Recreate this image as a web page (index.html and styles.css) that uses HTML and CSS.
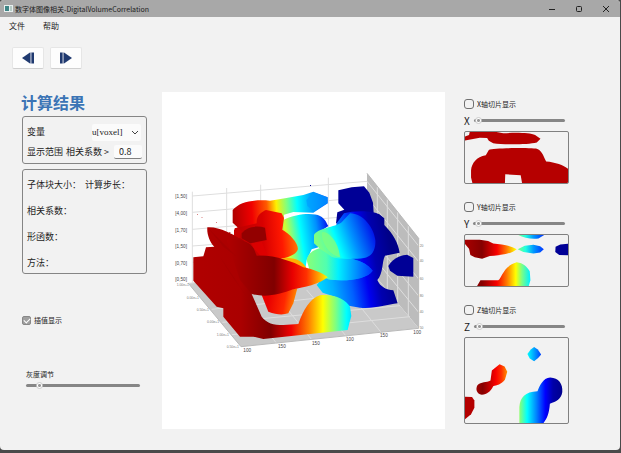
FILE: index.html
```html
<!DOCTYPE html>
<html lang="zh-CN">
<head>
<meta charset="utf-8">
<title>数字体图像相关-DigitalVolumeCorrelation</title>
<link rel="stylesheet" href="styles.css">
</head>
<body>
<div class="window">
  <header class="titlebar">
    <svg class="app-icon" viewBox="0 0 9 7"><rect width="9" height="7" fill="#e8efef"/><rect x="1" y="1" width="4" height="5" fill="#3f8586"/><rect x="6" y="1" width="2" height="5" fill="#b6cbc5"/></svg>
    <h1 class="title">数字体图像相关-DigitalVolumeCorrelation</h1>
    <div class="window-buttons">
      <button aria-label="最小化"><svg viewBox="0 0 8 8"><path d="M1 4.5H7"/></svg></button>
      <button aria-label="最大化"><svg viewBox="0 0 8 8"><rect x="1.5" y="1.5" width="5" height="5" rx="1"/></svg></button>
      <button aria-label="关闭"><svg viewBox="0 0 8 8"><path d="M1 1L7 7M7 1L1 7"/></svg></button>
    </div>
  </header>
  <nav class="menu"><button>文件</button><button>帮助</button></nav>
  <div class="toolbar">
    <button aria-label="上一步"><svg viewBox="0 0 12 12"><path d="M0 6L8 0.5V11.5Z" fill="#203a70"/><path d="M8 0.5H9.5V11.5H8Z" fill="#8996b3"/><path d="M9.5 0.5H12V11.5H9.5Z" fill="#203a70"/></svg></button>
    <button aria-label="下一步"><svg viewBox="0 0 12 12"><path d="M12 6L4 0.5V11.5Z" fill="#203a70"/><path d="M2.5 0.5H4V11.5H2.5Z" fill="#8996b3"/><path d="M0 0.5H2.5V11.5H0Z" fill="#203a70"/></svg></button>
  </div>
  <main class="workspace">
    <section class="results">
      <h2>计算结果</h2>
      <div class="panel options">
        <div class="row">
          <label for="variable">变量</label>
          <span class="combo">
            <select id="variable"><option>u[voxel]</option></select>
            <svg viewBox="0 0 8 5"><path d="M1 1L4 4L7 1"/></svg>
          </span>
        </div>
        <div class="row">
          <label for="threshold" class="range-label"><span>显示范围</span><span>相关系数 &gt;</span></label>
          <input id="threshold" class="number" type="text" value="0.8">
        </div>
      </div>
      <div class="panel summary">
        <p><span>子体块大小：</span><span>计算步长：</span></p>
        <p>相关系数：</p>
        <p>形函数：</p>
        <p>方法：</p>
      </div>
      <label class="check interpolate"><input type="checkbox" checked>插值显示</label>
      <div class="gray">
        <label for="gray">灰度调节</label>
        <input id="gray" type="range" min="0" max="100" value="9">
      </div>
    </section>

    <section class="view">
      <svg viewBox="6 -204 849 1011" role="img" aria-label="位移场三维视图">
        <defs>
          <linearGradient id="band" gradientUnits="userSpaceOnUse" x1="218" y1="150" x2="503" y2="130">
            <stop offset="0" stop-color="#b00000"/><stop offset=".2" stop-color="#f00000"/><stop offset=".36" stop-color="#ff5a00"/><stop offset=".46" stop-color="#fff000"/><stop offset=".57" stop-color="#80ff80"/><stop offset=".68" stop-color="#00ffff"/><stop offset=".82" stop-color="#00a8ff"/><stop offset="1" stop-color="#0048ff"/>
          </linearGradient>
          <linearGradient id="middle" gradientUnits="userSpaceOnUse" x1="350" y1="250" x2="515" y2="225">
            <stop offset="0" stop-color="#ffa000"/><stop offset=".18" stop-color="#d8ff28"/><stop offset=".32" stop-color="#70ff90"/><stop offset=".46" stop-color="#00ffff"/><stop offset=".75" stop-color="#0090ff"/><stop offset="1" stop-color="#0000f0"/>
          </linearGradient>
          <linearGradient id="lobe" gradientUnits="userSpaceOnUse" x1="220" y1="230" x2="420" y2="215">
            <stop offset="0" stop-color="#b80000"/><stop offset=".45" stop-color="#d80000"/><stop offset=".72" stop-color="#ff1800"/><stop offset="1" stop-color="#ff8800"/>
          </linearGradient>
          <linearGradient id="blue" gradientUnits="userSpaceOnUse" x1="470" y1="350" x2="700" y2="310">
            <stop offset="0" stop-color="#00d8ff"/><stop offset=".18" stop-color="#00b0ff"/><stop offset=".42" stop-color="#0060ff"/><stop offset=".63" stop-color="#0000f0"/><stop offset=".78" stop-color="#0000b0"/><stop offset="1" stop-color="#000088"/>
          </linearGradient>
          <linearGradient id="upper" gradientUnits="userSpaceOnUse" x1="480" y1="270" x2="645" y2="210">
            <stop offset="0" stop-color="#80ff80"/><stop offset=".2" stop-color="#50ffb0"/><stop offset=".32" stop-color="#00ffff"/><stop offset=".6" stop-color="#0090ff"/><stop offset="1" stop-color="#0008e8"/>
          </linearGradient>
          <linearGradient id="lower" gradientUnits="userSpaceOnUse" x1="440" y1="0" x2="638" y2="0">
            <stop offset="0" stop-color="#88ff78"/><stop offset=".3" stop-color="#50ffb0"/><stop offset=".48" stop-color="#00f0ff"/><stop offset=".75" stop-color="#0090ff"/><stop offset="1" stop-color="#0030ff"/>
          </linearGradient>
          <linearGradient id="cone" gradientUnits="userSpaceOnUse" x1="200" y1="0" x2="503" y2="0">
            <stop offset="0" stop-color="#b00000"/><stop offset=".47" stop-color="#800000"/><stop offset=".65" stop-color="#e80000"/><stop offset=".79" stop-color="#ff3000"/><stop offset=".9" stop-color="#ff9800"/><stop offset="1" stop-color="#f8ff00"/>
          </linearGradient>
          <linearGradient id="base" gradientUnits="userSpaceOnUse" x1="100" y1="0" x2="574" y2="0">
            <stop offset="0" stop-color="#b00000"/><stop offset=".3" stop-color="#aa0000"/><stop offset=".49" stop-color="#800000"/><stop offset=".62" stop-color="#f00000"/><stop offset=".73" stop-color="#ff8000"/><stop offset=".82" stop-color="#ffff00"/><stop offset=".9" stop-color="#80ff80"/><stop offset=".97" stop-color="#00ffff"/><stop offset="1" stop-color="#00e0ff"/>
          </linearGradient>
          <linearGradient id="tail" gradientUnits="userSpaceOnUse" x1="325" y1="420" x2="412" y2="435">
            <stop offset="0" stop-color="#e80000"/><stop offset=".55" stop-color="#ff2800"/><stop offset="1" stop-color="#ffa000"/>
          </linearGradient>
        </defs>
        <path d="M621 40L776 235V505L621 318Z" fill="#bcbcbc"/>
        <path d="M85 370L621 318L776 505L243 560Z" fill="#c9c9c9"/>
        <g fill="none" stroke="#dedede" stroke-width="3">
          <path d="M97 95V370M200 84V370M302 74V340M505 53V330M97 108L621 64M97 157L621 112M97 208L621 165M97 258L621 218M97 307L621 268M85 370L621 318"/>
          <path d="M621 64L776 258M621 112L776 305M621 165L776 357M621 218L776 408M621 268L776 457M652 80V355M682 118V390M713 155V430M745 195V468M155 448L680 392M187 487L720 437M215 524L750 470M350 550L290 475M456 540L360 420M560 530L440 390M664 518L560 390"/>
        </g>
        <path d="M621 40L776 235V505L243 560L85 370" fill="none" stroke="#b9b9b9" stroke-width="3"/>
        <path d="M450 75h3v3h-3Z" fill="#000090"/><path d="M112 162h2v2h-2ZM169 186h2v2h-2ZM125 172h2v2h-2ZM208 216h3v3h-3Z" fill="#b00000"/>
        <path d="M535 91L575 82L612 79L628 98L639 128L641 158L570 195L528 190L532 157L553 149L535 130Z" fill="#000096"/>
        <path d="M530 190L552 160C580 151 640 151 658 163L673 175V195C700 222 715 250 719 278L675 287C665 305 671 338 652 360C660 380 680 390 700 391L713 430C680 435 640 447 600 443L566 437L525 410L488 398L470 375L500 340Z" fill="url(#blue)"/>
        <path d="M685 318C700 290 730 285 741 284L760 294V350L712 347L690 332Z" fill="#000096"/>
        <path d="M370 180C410 160 460 158 480 168C495 175 500 190 505 198L465 225L475 262L455 268L440 300L437 320L365 295Z" fill="url(#middle)"/>
        <path d="M218 150C240 125 280 118 330 122L375 115L430 105L460 95L503 112V130L460 158L400 156L372 164V215L250 260L236 205L218 188Z" fill="url(#band)"/>
        <path d="M439 120L460 97L503 112V130L461 154L442 138Z" fill="#009eff" opacity=".7"/>
        <path d="M224 205L290 190C288 165 308 154 318 150L365 160L372 174L367 209C390 222 418 252 413 270C407 284 385 292 362 297L310 315L220 260Z" fill="url(#lobe)"/>
        <path d="M245 220C260 200 290 196 315 203L320 240L270 250L245 235Z" fill="#930000"/>
        <path d="M440 300C445 272 480 259 500 264L520 290C600 293 625 315 638 332C622 357 560 366 505 358L450 335Z" fill="url(#lower)"/>
        <path d="M503 352L514 305L520 290C600 293 625 315 638 332C622 357 560 366 505 358Z" fill="url(#lower)"/>
        <path d="M462 225C472 205 525 202 545 187L570 160C610 160 642 205 646 240C648 270 635 290 612 294C580 299 530 297 515 290L480 266L462 250Z" fill="url(#upper)"/>
        <path d="M485 218C495 208 535 235 540 292C515 288 485 255 485 218Z" fill="#80ff80" opacity=".8"/>
        <path d="M362 297C390 288 430 298 441 328L430 350L350 325Z" fill="#ffb000"/>
        <path d="M305 405L325 455C350 465 370 465 385 460L400 430L412 385Z" fill="url(#tail)"/>
        <path d="M100 292L130 289L138 262L163 260C148 245 140 220 142 202C180 200 215 222 250 240L290 320L275 402L305 470C320 490 340 495 370 495L415 492C430 450 450 415 480 406C520 400 558 418 570 440L574 468L568 490L563 510L310 537L280 530L240 530L190 470V445L170 440L100 362Z" fill="url(#base)"/>
        <path d="M200 240C230 232 250 240 270 252L300 286C350 288 400 305 430 322C460 328 490 340 503 352C480 372 430 383 400 388C360 402 320 414 275 402L240 360Z" fill="url(#cone)"/>
        <path d="M275 250L305 246L322 286L290 287Z" fill="#e00000" opacity=".7"/>
        <path d="M222 210L233 202L245 214L238 235L222 226Z" fill="#c80000"/>
        <path d="M145 205L230 290L190 260ZM180 290L260 410L210 340Z" fill="#950000" opacity=".3"/>
        <g class="ticks">
          <text x="46" y="115">[1,50]</text><text x="46" y="165">[4,00]</text><text x="46" y="215">[1,70]</text><text x="46" y="264">[1,50]</text><text x="46" y="314">[0,70]</text><text x="46" y="364">[0,50]</text>
          <text x="250" y="575">100</text><text x="354" y="564">150</text><text x="456" y="554">150</text><text x="558" y="543">100</text><text x="660" y="532">150</text><text x="760" y="522">100</text>
        </g>
        <g class="ticks small">
          <text x="50" y="379">1.00e+1</text><text x="80" y="416">0.00e+1</text><text x="110" y="453">0.50e+1</text><text x="141" y="490">0.00e+1</text><text x="170" y="527">1.00e+1</text><text x="200" y="565">0.50e+1</text>
          <text x="779" y="260">20</text><text x="779" y="307">40</text><text x="779" y="359">60</text><text x="779" y="410">80</text><text x="779" y="459">40</text><text x="779" y="507">50</text>
        </g>
      </svg>
    </section>

    <section class="slices">
      <div class="slice">
        <label class="check"><input type="checkbox">X轴切片显示</label>
        <div class="axis"><label for="axis-x">X</label><input id="axis-x" type="range" min="0" max="100" value="2"></div>
        <svg class="plot" viewBox="46 127 307 151" preserveAspectRatio="none" role="img" aria-label="X轴切片">
          <path d="M60 127H140L160 131C195 128 240 129 255 136L271 147L260 158C230 165 160 165 130 160L117 153L112 145L90 144L46 152V140L58 136Z" fill="#b60000"/>
          <path d="M68 278L64 262V240C66 220 80 200 108 196L117 180C130 173 240 174 262 177C278 185 280 200 288 214C315 216 340 225 353 236V278H216L212 255L166 252L165 278Z" fill="#b60000"/>
        </svg>
      </div>
      <div class="slice">
        <label class="check"><input type="checkbox">Y轴切片显示</label>
        <div class="axis"><label for="axis-y">Y</label><input id="axis-y" type="range" min="0" max="100" value="2"></div>
        <svg class="plot" viewBox="46 121 307 151" preserveAspectRatio="none" role="img" aria-label="Y轴切片">
          <defs>
            <linearGradient id="yleft" gradientUnits="userSpaceOnUse" x1="46" y1="0" x2="240" y2="0"><stop offset="0" stop-color="#a80000"/><stop offset=".26" stop-color="#850000"/><stop offset=".49" stop-color="#f80000"/><stop offset=".64" stop-color="#ff7800"/><stop offset=".78" stop-color="#ffff00"/><stop offset=".87" stop-color="#80ff80"/><stop offset="1" stop-color="#00f0ff"/></linearGradient>
            <linearGradient id="yright" gradientUnits="userSpaceOnUse" x1="203" y1="0" x2="282" y2="0"><stop offset="0" stop-color="#80ff80"/><stop offset=".3" stop-color="#20ffe0"/><stop offset=".6" stop-color="#0098ff"/><stop offset="1" stop-color="#0030ff"/></linearGradient>
          </defs>
          <path d="M46 135H90L115 139L130 146C155 148 180 152 200 163C185 176 155 181 120 183L97 191L75 187L62 180L58 162L46 148ZM82 272L92 255H145C156 250 158 215 200 202C220 204 230 215 239 228L241 255L236 272Z" fill="url(#yleft)"/>
          <path d="M205 121H282L265 131C245 134 220 129 205 121ZM203 163L224 153L250 150L270 154L281 163L270 173L250 176L220 171Z" fill="url(#yright)"/>
          <path d="M353 147L330 149L316 156L315 171L327 180L353 181Z" fill="#000096"/>
        </svg>
      </div>
      <div class="slice">
        <label class="check"><input type="checkbox">Z轴切片显示</label>
        <div class="axis"><label for="axis-z">Z</label><input id="axis-z" type="range" min="0" max="100" value="2"></div>
        <svg class="plot tall" viewBox="46 112 307 256" preserveAspectRatio="none" role="img" aria-label="Z轴切片">
          <defs>
            <linearGradient id="zwarm" gradientUnits="userSpaceOnUse" x1="80" y1="0" x2="173" y2="0"><stop offset="0" stop-color="#a00000"/><stop offset=".2" stop-color="#850000"/><stop offset=".62" stop-color="#f80000"/><stop offset=".8" stop-color="#ff3000"/><stop offset="1" stop-color="#ff9800"/></linearGradient>
            <linearGradient id="zcool" gradientUnits="userSpaceOnUse" x1="208" y1="0" x2="337" y2="0"><stop offset="0" stop-color="#90ff70"/><stop offset=".18" stop-color="#00ffff"/><stop offset=".4" stop-color="#0080ff"/><stop offset=".6" stop-color="#0000ff"/><stop offset=".78" stop-color="#0000a8"/><stop offset="1" stop-color="#00008c"/></linearGradient>
            <linearGradient id="zdot" gradientUnits="userSpaceOnUse" x1="232" y1="0" x2="273" y2="0"><stop offset="0" stop-color="#00ffff"/><stop offset=".5" stop-color="#00a0ff"/><stop offset="1" stop-color="#0040ff"/></linearGradient>
          </defs>
          <path d="M46 289L67 290L74 300V322L64 342L46 357Z" fill="#b40000"/>
          <path d="M149 191L164 198L172 214L165 238C155 252 140 255 130 257C122 274 112 280 96 283C80 280 77 265 83 254C94 243 110 247 122 240L126 210Z" fill="url(#zwarm)"/>
          <path d="M252 139L263 147L273 162L264 172L252 182L239 174L232 160L242 147Z" fill="url(#zdot)"/>
          <path d="M208 368V320C210 290 225 274 262 272C268 258 278 232 300 231C325 232 338 250 336 275C333 296 318 304 299 310C297 340 290 355 280 368Z" fill="url(#zcool)"/>
        </svg>
      </div>
    </section>
  </main>
</div>
</body>
</html>
```
FILE: styles.css
```css
* { box-sizing: border-box; }

body {
  margin: 0;
  min-height: 100vh;
  padding: 0 1px 3px 0;
  display: flex;
  background: #4a4a4a;
  color: #1c1c1c;
  font-family: "Noto Sans CJK SC", sans-serif;
  font-size: 9px;
  line-height: 12px;
}

h1, h2, p { margin: 0; font-weight: 400; }
button, input, select { font: inherit; color: inherit; margin: 0; padding: 0; border: 0; background: none; }
svg { display: block; }

.window {
  flex: 1;
  display: flex;
  flex-direction: column;
  background: #f2f2f2;
  border-radius: 4px;
  overflow: hidden;
}

.titlebar {
  display: flex;
  align-items: center;
  height: 17px;
  padding: 0 10px 0 4px;
  gap: 2px;
  background: #a8a8a8;
}
.app-icon { width: 9px; height: 7px; }
.title { flex: 1; font-size: 7px; }
.window-buttons { display: flex; gap: 19px; }
.window-buttons svg { width: 8px; height: 8px; fill: none; stroke: #222; }

.menu { display: flex; gap: 18px; padding: 3px 9px; font-size: 8px; }

.toolbar { display: flex; gap: 6px; padding: 12px 12px 23px; }
.toolbar button {
  display: grid;
  place-items: center;
  width: 32px;
  height: 22px;
  background: #fdfdfd;
  border: 1px solid #e6e6e6;
  border-bottom-color: #d0d0d0;
  border-radius: 2px;
}
.toolbar svg { width: 12px; height: 12px; }

.workspace {
  flex: 1;
  display: grid;
  grid-template-columns: 125px minmax(0, 1fr) 105px;
  align-items: start;
  padding: 0 51px 21px 22px;
}

.results { display: flex; flex-direction: column; }
.results h2 { color: #3b74b5; font-size: 16px; font-weight: 700; line-height: 20px; margin: 0 0 4px -1px; }
.panel { border: 1px solid #858585; border-radius: 3px; padding: 0 4px; }
.options { height: 48px; padding-top: 5px; }
.row { display: flex; justify-content: space-between; align-items: center; height: 20px; }
.range-label { display: flex; gap: 3px; white-space: nowrap; }
.combo { display: grid; align-items: center; width: 49px; height: 17px; margin-right: 1px; background: #fbfbfb; border-radius: 2px; }
.combo > * { grid-area: 1 / 1; }
.combo select { appearance: none; width: 100%; font-family: "Liberation Serif", serif; }
.combo svg { justify-self: end; width: 8px; height: 5px; margin-right: 2px; fill: none; stroke: #444; pointer-events: none; }
.number { width: 28px; height: 14px; background: #fbfbfb; border-bottom: 1px solid #808080; border-radius: 2px; padding-left: 5px; }
.summary { display: grid; gap: 14px; margin-top: 5px; padding-top: 9px; padding-bottom: 4px; }
.summary p { display: flex; gap: 4px; white-space: nowrap; }

.check { display: flex; align-items: center; gap: 3px; height: 10px; font-size: 7px; line-height: 10px; }
.check input { appearance: none; display: grid; place-items: center; width: 10px; height: 10px; border: 1px solid #707070; border-radius: 3px; }
.check input:checked { width: 9px; height: 9px; background: #a0a0a0; border-color: #888; border-radius: 2px; }
.check input:checked::before { content: ""; width: 5px; height: 3px; border: solid #fff; border-width: 0 0 1px 1px; transform: rotate(-45deg); }
.interpolate { margin-top: 41px; }
.gray { display: grid; margin: 43px 7px 0 4px; font-size: 7px; }

input[type="range"] { appearance: none; width: 100%; min-width: 0; height: 10px; }
input[type="range"]::-webkit-slider-runnable-track { height: 3px; border-radius: 2px; background: #868686; }
input[type="range"]::-webkit-slider-thumb {
  appearance: none;
  width: 7px;
  height: 7px;
  margin-top: -2px;
  border: 1px solid #ccc;
  border-radius: 50%;
  background: radial-gradient(circle, #999 1px, #fff 2px);
}

.view { margin: 0 19px 0 15px; background: #fff; }
.view svg { width: 100%; height: auto; }
.ticks { font-family: "Liberation Sans", sans-serif; font-size: 14px; fill: #444; }
.small { font-size: 10px; fill: #777; }

.slices { display: grid; gap: 18px; padding-top: 7px; }
.axis { display: flex; align-items: center; gap: 4px; height: 11px; margin: 6px 4px 5px 0; font-size: 10px; }
.plot { width: 100%; height: 53px; border: 1px solid #808080; border-radius: 2px; }
.tall { height: 87px; }
```
